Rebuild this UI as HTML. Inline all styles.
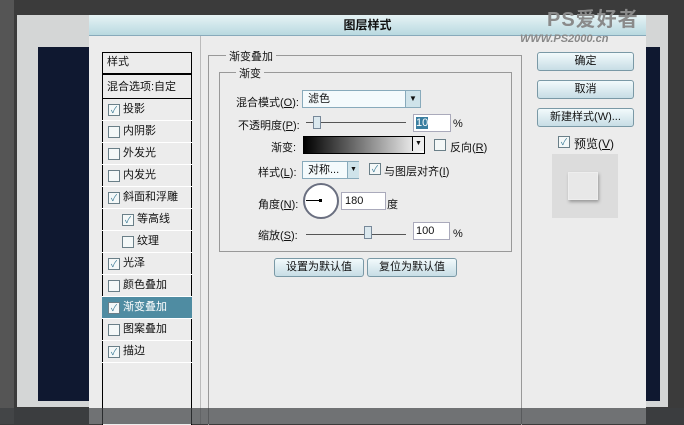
<!DOCTYPE html><html><head><meta charset="utf-8"><style>
body{margin:0;width:684px;height:424px;overflow:hidden;background:#3b3b3b;font-family:"Liberation Sans","Noto Sans CJK SC",sans-serif;font-size:11px;color:#111;position:relative}
.a{position:absolute}
.cb{position:absolute;width:10px;height:10px;border:1px solid #6a7f88;background:#f4f8f8;font-size:9px;line-height:10px;text-align:center;color:#3a7a95}
.it{position:absolute;left:102px;width:90px;height:21px;border-bottom:1px solid #fff;line-height:21px}
.btn{position:absolute;border:1px solid #7a99a6;border-radius:3px;background:linear-gradient(#f2fafc,#c7dde5);text-align:center;line-height:17px;height:17px}
.inp{position:absolute;background:#fff;border:1px solid #aab;height:16px;line-height:16px}
</style></head><body>
<div class="a" style="left:0;top:0;width:14px;height:424px;background:#555"></div>
<div class="a" style="left:17px;top:15px;width:651px;height:392px;background:#d4d6d6"></div>
<div class="a" style="left:38px;top:47px;width:622px;height:354px;background:#0f1830"></div>
<div class="a" style="left:89px;top:15px;width:557px;height:20px;background:linear-gradient(#e6f3f5,#b9d9e0);border-bottom:1px solid #8ab;text-align:center;line-height:20px;font-weight:bold;font-size:12px">图层样式</div>
<div class="a" style="left:89px;top:36px;width:557px;height:388px;background:#ececec"></div>
<div class="a" style="left:547px;top:3px;color:#8a8a8a;font-size:20px;font-weight:bold;letter-spacing:1px">PS爱好者</div>
<div class="a" style="left:520px;top:33px;color:#888;font-size:11px;font-style:italic;font-weight:bold">WWW.PS2000.cn</div>
<div class="a" style="left:102px;top:52px;width:88px;height:372px;border:1px solid #000;border-bottom:none;background:#ececec"></div>
<div class="it" style="top:52px;padding-left:5px;width:85px;border-bottom:2px solid #000;height:21px">样式</div>
<div class="it" style="top:77px;padding-left:5px;width:85px;border-bottom:1px solid #000">混合选项:自定</div>
<div class="it" style="top:99px"><span class="cb" style="left:6px;top:5px">✓</span><span style="margin-left:21px">投影</span></div>
<div class="it" style="top:121px"><span class="cb" style="left:6px;top:5px"></span><span style="margin-left:21px">内阴影</span></div>
<div class="it" style="top:143px"><span class="cb" style="left:6px;top:5px"></span><span style="margin-left:21px">外发光</span></div>
<div class="it" style="top:165px"><span class="cb" style="left:6px;top:5px"></span><span style="margin-left:21px">内发光</span></div>
<div class="it" style="top:187px"><span class="cb" style="left:6px;top:5px">✓</span><span style="margin-left:21px">斜面和浮雕</span></div>
<div class="it" style="top:209px"><span class="cb" style="left:20px;top:5px">✓</span><span style="margin-left:35px">等高线</span></div>
<div class="it" style="top:231px"><span class="cb" style="left:20px;top:5px"></span><span style="margin-left:35px">纹理</span></div>
<div class="it" style="top:253px"><span class="cb" style="left:6px;top:5px">✓</span><span style="margin-left:21px">光泽</span></div>
<div class="it" style="top:275px"><span class="cb" style="left:6px;top:5px"></span><span style="margin-left:21px">颜色叠加</span></div>
<div class="it" style="top:297px;background:#4f8ca2;color:#fff"><span class="cb" style="left:6px;top:5px">✓</span><span style="margin-left:21px">渐变叠加</span></div>
<div class="it" style="top:319px"><span class="cb" style="left:6px;top:5px"></span><span style="margin-left:21px">图案叠加</span></div>
<div class="it" style="top:341px"><span class="cb" style="left:6px;top:5px">✓</span><span style="margin-left:21px">描边</span></div>
<div class="a" style="left:208px;top:55px;width:312px;height:369px;border:1px solid #999;border-bottom:none"></div>
<div class="a" style="left:226px;top:48px;background:#ececec;padding:0 3px">渐变叠加</div>
<div class="a" style="left:219px;top:72px;width:291px;height:178px;border:1px solid #999"></div>
<div class="a" style="left:236px;top:65px;background:#ececec;padding:0 3px">渐变</div>
<div class="a" style="left:236px;top:94px">混合模式(<u>O</u>):</div>
<div class="inp" style="left:302px;top:90px;width:112px;border-color:#8ab;background:#f4fafc;padding-left:5px">滤色<span class="a" style="right:0;top:0;width:14px;height:16px;background:#cfe3ea;border-left:1px solid #8ab;text-align:center;font-size:8px">▼</span></div>
<div class="a" style="left:238px;top:117px">不透明度(<u>P</u>):</div>
<div class="a" style="left:306px;top:122px;width:100px;height:1px;background:#555"></div>
<div class="a" style="left:313px;top:116px;width:6px;height:11px;background:#dbe8ee;border:1px solid #789"></div>
<div class="inp" style="left:413px;top:114px;width:34px;padding-left:2px"><span style="background:#3a7ea0;color:#fff">10</span></div>
<div class="a" style="left:453px;top:118px">%</div>
<div class="a" style="left:271px;top:139px">渐变:</div>
<div class="a" style="left:303px;top:136px;width:120px;height:16px;border:1px solid #000;background:linear-gradient(90deg,#000,#fff)"></div>
<div class="a" style="left:412px;top:137px;width:11px;height:14px;background:#eee;border-left:1px solid #000;font-size:7px;text-align:center;line-height:14px">▼</div>
<div class="cb" style="left:434px;top:139px"></div><div class="a" style="left:450px;top:139px">反向(<u>R</u>)</div>
<div class="a" style="left:258px;top:164px">样式(<u>L</u>):</div>
<div class="inp" style="left:302px;top:161px;width:50px;border-color:#8ab;background:#f4fafc;padding-left:5px">对称...<span class="a" style="left:44px;top:0;width:11px;height:16px;background:#cfe3ea;border-left:1px solid #8ab;font-size:7px;text-align:center">▼</span></div>
<div class="cb" style="left:369px;top:163px">✓</div><div class="a" style="left:384px;top:163px">与图层对齐(<u>I</u>)</div>
<div class="a" style="left:258px;top:196px">角度(<u>N</u>):</div>
<div class="a" style="left:303px;top:183px;width:32px;height:32px;border:2px solid #6a6f80;border-radius:50%;background:#fff"></div>
<div class="a" style="left:306px;top:200px;width:14px;height:1px;background:#000"></div>
<div class="a" style="left:319px;top:199px;width:3px;height:3px;background:#000"></div>
<div class="inp" style="left:341px;top:192px;width:40px;padding-left:3px">180</div>
<div class="a" style="left:387px;top:196px">度</div>
<div class="a" style="left:258px;top:227px">缩放(<u>S</u>):</div>
<div class="a" style="left:306px;top:234px;width:100px;height:1px;background:#555"></div>
<div class="a" style="left:364px;top:226px;width:6px;height:11px;background:#dbe8ee;border:1px solid #789"></div>
<div class="inp" style="left:413px;top:222px;width:33px;padding-left:2px">100</div>
<div class="a" style="left:453px;top:228px">%</div>
<div class="btn" style="left:274px;top:258px;width:88px">设置为默认值</div>
<div class="btn" style="left:367px;top:258px;width:88px">复位为默认值</div>
<div class="btn" style="left:537px;top:52px;width:95px">确定</div>
<div class="btn" style="left:537px;top:80px;width:95px">取消</div>
<div class="btn" style="left:537px;top:108px;width:95px">新建样式(W)...</div>
<div class="cb" style="left:558px;top:136px">✓</div><div class="a" style="left:574px;top:135px;font-size:12px">预览(<u>V</u>)</div>
<div class="a" style="left:552px;top:154px;width:66px;height:64px;background:#dcdcdc"></div>
<div class="a" style="left:568px;top:172px;width:28px;height:26px;background:#e8e8e8;box-shadow:1px 2px 3px #999;border:1px solid #eee"></div>
<div class="a" style="left:200px;top:36px;width:1px;height:388px;background:#bbb"></div>
<div class="a" style="left:0;top:408px;width:684px;height:16px;background:rgba(60,62,66,0.7)"></div>
</body></html>
